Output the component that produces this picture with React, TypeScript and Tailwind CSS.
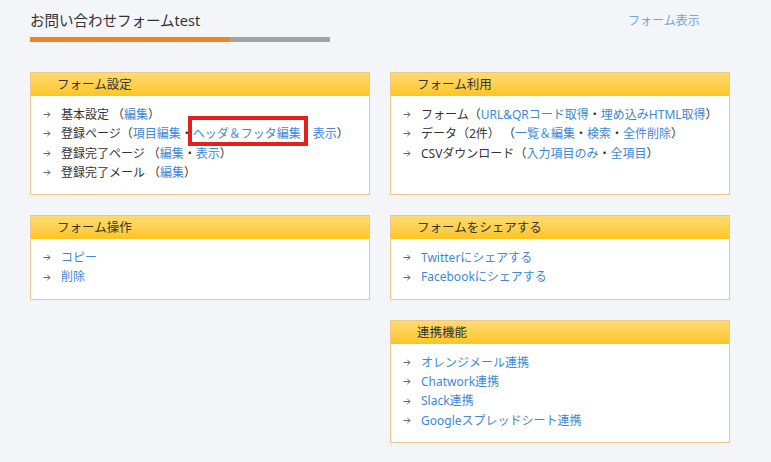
import React from "react";

// 1行分。text は黒字、links は青いリンク（括弧付きで並べる）
type Item = { text?: string; gap?: boolean; links?: string[]; link?: string };
type Panel = { title: string; items: Item[] };

const left1: Panel = {
  title: "フォーム設定",
  items: [
    { text: "基本設定", gap: true, links: ["編集"] },
    { text: "登録ページ", links: ["項目編集", "ヘッダ＆フッタ編集", "表示"] },
    { text: "登録完了ページ", gap: true, links: ["編集", "表示"] },
    { text: "登録完了メール", gap: true, links: ["編集"] },
  ],
};

const right1: Panel = {
  title: "フォーム利用",
  items: [
    { text: "フォーム", links: ["URL&QRコード取得", "埋め込みHTML取得"] },
    { text: "データ（2件）", gap: true, links: ["一覧＆編集", "検索", "全件削除"] },
    { text: "CSVダウンロード", links: ["入力項目のみ", "全項目"] },
  ],
};

const left2: Panel = {
  title: "フォーム操作",
  items: [{ link: "コピー" }, { link: "削除" }],
};

const right2: Panel = {
  title: "フォームをシェアする",
  items: [{ link: "Twitterにシェアする" }, { link: "Facebookにシェアする" }],
};

const right3: Panel = {
  title: "連携機能",
  items: [
    { link: "オレンジメール連携" },
    { link: "Chatwork連携" },
    { link: "Slack連携" },
    { link: "Googleスプレッドシート連携" },
  ],
};

function Arrow() {
  return (
    <svg width="8" height="7" viewBox="0 0 8 7" className="mr-[10px] shrink-0">
      <path d="M0.5 3.5H7M4.3 0.8L7 3.5L4.3 6.2" fill="none" stroke="#555" strokeWidth="0.9" />
    </svg>
  );
}

function Box({ panel, highlight }: { panel: Panel; highlight?: boolean }) {
  return (
    <section className="relative flex flex-col border border-[#eec58a] bg-white">
      <h2 className="h-[23px] bg-gradient-to-b from-[#fedb6f] to-[#fcc51b] pl-[26px] text-[12.5px] leading-[23px] text-[#333]">
        {panel.title}
      </h2>
      <ul className="px-[12px] pb-[12px] pt-[9px] text-[12px] leading-[19.3px] text-[#333]">
        {panel.items.map((it, i) => (
          <li key={i} className="flex items-center whitespace-nowrap">
            <Arrow />
            {it.link && <a className="text-[#3d88d4]">{it.link}</a>}
            {it.text && <span className={it.gap ? "mr-[3px]" : ""}>{it.text}</span>}
            {it.links && (
              <span>
                （
                {it.links.map((l, j) => (
                  <React.Fragment key={j}>
                    {j > 0 && "・"}
                    <a className="text-[#3d88d4]">{l}</a>
                  </React.Fragment>
                ))}
                ）
              </span>
            )}
          </li>
        ))}
      </ul>
      {/* 赤枠（ヘッダ＆フッタ編集を囲む注釈） */}
      {highlight && (
        <div className="absolute left-[157px] top-[43px] h-[30px] w-[120px] border-[4px] border-[#e3201b]" />
      )}
    </section>
  );
}

export default function App() {
  return (
    <div
      className="min-h-[462px] w-[771px] bg-[#f4f5f9] px-[30px] pt-[9px]"
      style={{ fontFamily: '"Noto Sans", "Noto Sans CJK JP", sans-serif' }}
    >
      {/* タイトル行 */}
      <div className="flex items-start">
        <div className="w-[300px]">
          <h1 className="text-[14.5px] leading-[22px] text-[#333]">お問い合わせフォームtest</h1>
          <div className="mt-[6px] flex h-[5px]">
            <div className="w-[200px] bg-[#ef8420]" />
            <div className="flex-1 bg-[#a3a3a3]" />
          </div>
        </div>
        <a className="ml-[298px] mt-[3px] text-[12px] leading-[18px] text-[#71a3dc]">フォーム表示</a>
      </div>

      {/* パネル群 */}
      <div className="mt-[30px] grid grid-cols-[340px_340px] gap-x-[20px] gap-y-[20px]">
        <Box panel={left1} highlight />
        <Box panel={right1} />
        <Box panel={left2} />
        <Box panel={right2} />
        <div />
        <Box panel={right3} />
      </div>
    </div>
  );
}
